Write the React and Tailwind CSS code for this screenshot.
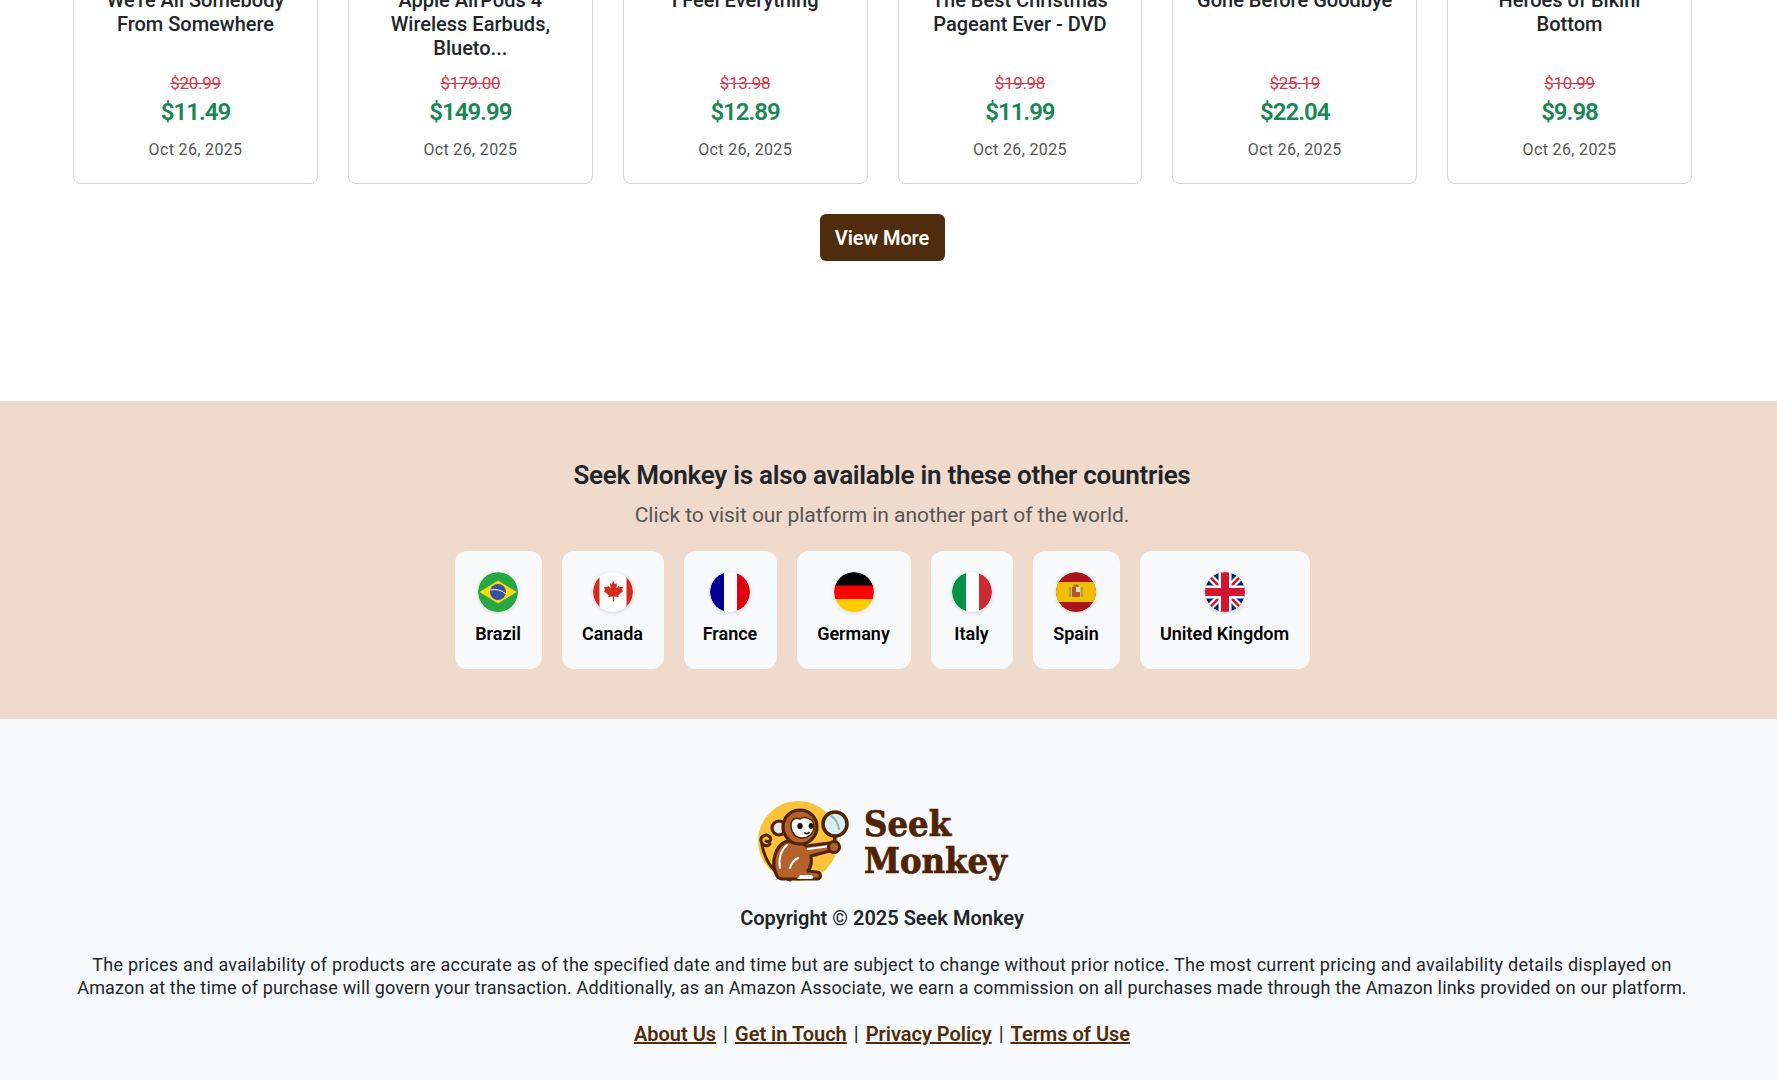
const FONT = { fontFamily: 'Roboto, sans-serif' };

const PRODUCTS = [
  { title: ["We're All Somebody", 'From Somewhere'], was: '$20.99', now: '$11.49' },
  { title: ['Apple AirPods 4', 'Wireless Earbuds,', 'Blueto...'], was: '$179.00', now: '$149.99' },
  { title: ['I Feel Everything'], was: '$13.98', now: '$12.89' },
  { title: ['The Best Christmas', 'Pageant Ever - DVD'], was: '$19.98', now: '$11.99' },
  { title: ['Gone Before Goodbye'], was: '$25.19', now: '$22.04' },
  { title: ['Heroes of Bikini', 'Bottom'], was: '$10.99', now: '$9.98' },
];

function Flag({ children }) {
  return (
    <svg viewBox="0 0 40 40" className="w-10 h-10 rounded-full drop-shadow-sm">
      <defs><clipPath id="round"><circle cx="20" cy="20" r="20" /></clipPath></defs>
      <g clipPath="url(#round)">{children}</g>
    </svg>
  );
}

const COUNTRIES = [
  { name: 'Brazil', w: 'w-[87px]', flag: <><rect width="40" height="40" fill="#28a745" /><path d="M20 8.500 38.500 20 20 31.500 1.500 20Z" fill="#fada0a" /><circle cx="20" cy="20" r="8" fill="#3b4fa8" /><path d="M12.500 18q8-2 15 3.500" stroke="#fff" strokeWidth="1" fill="none" /></> },
  { name: 'Canada', w: 'w-[102px]', flag: <><rect width="40" height="40" fill="#fff" /><rect width="6.500" height="40" fill="#d52b1e" /><rect x="33.500" width="6.500" height="40" fill="#d52b1e" /><path d="M20 8.500l2 3.800 2-1-.7 5 2.600-2.600.7 1.600 3.400-.6-1 3.500 1.300.8-5 4.200.5 1.800-4.800-.5.200 5h-1.400l.2-5-4.800.5.500-1.800-5-4.200 1.300-.8-1-3.500 3.400.6.700-1.600 2.600 2.600-.7-5 2 1z" fill="#d52b1e" /></> },
  { name: 'France', w: 'w-[93px]', flag: <><rect width="14" height="40" fill="#000091" /><rect x="14" width="13" height="40" fill="#fff" /><rect x="27" width="13" height="40" fill="#e1000f" /></> },
  { name: 'Germany', w: 'w-[114px]', flag: <><rect width="40" height="14" fill="#000" /><rect y="13.500" width="40" height="13.500" fill="#f00" /><rect y="27" width="40" height="13" fill="#fc0" /></> },
  { name: 'Italy', w: 'w-[82px]', flag: <><rect width="14" height="40" fill="#009246" /><rect x="14" width="13" height="40" fill="#fff" /><rect x="27" width="13" height="40" fill="#ce2b37" /></> },
  { name: 'Spain', w: 'w-[87px]', flag: <><rect width="40" height="40" fill="#aa151b" /><rect y="10" width="40" height="20" fill="#f1bf00" /><rect x="16" y="15" width="8" height="10" rx="1" fill="#b5532a" /><rect x="20" y="15" width="4" height="5" fill="#e8d9d0" /><rect x="13" y="15" width="2" height="10" fill="#a89a6a" /><rect x="25" y="15" width="2" height="10" fill="#a89a6a" /><rect x="17.500" y="12.500" width="5" height="2.500" fill="#a8741a" /></> },
  { name: 'United Kingdom', w: 'w-[170px]', flag: <><rect width="40" height="40" fill="#fff" /><path d="M0 0 40 40M40 0 0 40" stroke="#012169" strokeWidth="24" /><path d="M0 0 40 40M40 0 0 40" stroke="#fff" strokeWidth="7" /><path d="M0 0 40 40M40 0 0 40" stroke="#d6142f" strokeWidth="2.500" /><path d="M20 0V40M0 20H40" stroke="#fff" strokeWidth="13" /><path d="M20 0V40M0 20H40" stroke="#d6142f" strokeWidth="8" /></> },
];

function Logo() {
  return (
    <svg viewBox="7 3 96 84" className="w-[96px] h-[84px] shrink-0">
      <circle cx="48" cy="45" r="40" fill="#fdc23c" />
      <path d="M20 48c-2 3-8 2-9-3-1-5 6-8 9-4 2 3-1 6-4 4M12 49c3 15 11 29 28 35" stroke="#4f2303" strokeWidth="3" fill="none" strokeLinecap="round" />
      <path d="M26 78c-5-12-1-27 9-32 9-4 17 0 21 4l23-3c5 0 6 8 1 8l-19 5c1 6 0 11-3 15l9 1c4 0 5 7 0 7H33c-3 0-6-2-7-5z" fill="#b5612c" stroke="#4f2303" strokeWidth="3.200" strokeLinejoin="round" />
      <path d="M30 72c-2-9 1-18 7-23M40 72c1-4 4-8 8-10M58 53l19-2.500" stroke="#fff" strokeWidth="2" fill="none" strokeLinecap="round" />
      <path d="M50 79h11c3 1 3 4 0 4H47z" fill="#fff" />
      <circle cx="29" cy="32" r="7" fill="#efe6df" stroke="#4f2303" strokeWidth="3.200" />
      <circle cx="50" cy="31" r="17" fill="#b5612c" stroke="#4f2303" strokeWidth="3.200" />
      <path d="M41 29c0-6 5-8 9-6 4-3 14-1 14 7 0 8-6 12-12 12s-11-5-11-13z" fill="#fff" stroke="#4f2303" strokeWidth="1.500" />
      <ellipse cx="50" cy="30" rx="2.700" ry="3" fill="#241006" />
      <ellipse cx="61" cy="30" rx="2.400" ry="3" fill="#241006" />
      <path d="M55 37q3 1.500 4-.5" stroke="#241006" strokeWidth="1.800" fill="none" strokeLinecap="round" />
      <path d="M85 40l-1 10" stroke="#4f2303" strokeWidth="3.500" strokeLinecap="round" />
      <circle cx="84" cy="51" r="5.500" fill="#b5612c" stroke="#4f2303" strokeWidth="3" />
      <circle cx="85" cy="28" r="12" fill="#d8eef2" stroke="#4f2303" strokeWidth="3.500" />
      <path d="M81 20c4 2 7 7 8 13" stroke="#9fb0b5" strokeWidth="2" fill="none" strokeLinecap="round" />
    </svg>
  );
}

function ProductCard({ p }) {
  return (
    <div className="w-[244.8px] h-[201px] shrink-0 bg-white border border-[#d5d5d5] rounded-lg flex flex-col items-center">
      <div className="h-[89px] pt-[4px] text-[20px] leading-[24px] font-medium text-[#212529] text-center">
        {p.title.map(t => <div key={t} className="whitespace-nowrap">{t}</div>)}
      </div>
      <div className="text-[17px] leading-[20px] line-through text-[#dc3545] tracking-[-0.3px]">{p.was}</div>
      <div className="mt-[3px] text-[24px] leading-[32px] font-semibold text-[#198754] tracking-[-1px]">{p.now}</div>
      <div className="mt-[10px] text-[16px] leading-[24px] text-[#555] tracking-[0.35px]">Oct 26, 2025</div>
    </div>
  );
}

export default function App() {
  return (
    <div className="h-[1080px] overflow-hidden bg-white" style={FONT}>
      <div className="-mt-[17px] pr-[12px] flex justify-center gap-[30px]">
        {PRODUCTS.map(p => <ProductCard key={p.now} p={p} />)}
      </div>
      <div className="mt-[30px] pr-[13px] flex justify-center">
        <button className="w-[125px] h-[47px] rounded-md bg-[#4f2c0b] text-white text-[20px] font-semibold tracking-[-0.1px]">View More</button>
      </div>

      <section className="mt-[140px] h-[318px] pr-[13px] bg-[#f0dacc] flex flex-col items-center pt-[56px]">
        <h2 className="text-[26px] leading-[36px] font-semibold text-[#212529] tracking-[-0.25px]">Seek Monkey is also available in these other countries</h2>
        <p className="mt-[7px] text-[21px] leading-[30px] text-[#555] tracking-[-0.05px]">Click to visit our platform in another part of the world.</p>
        <div className="mt-[21px] flex justify-center gap-[20px]">
          {COUNTRIES.map(c => (
            <div key={c.name} className={`${c.w} h-[118px] bg-[#f8f9fa] rounded-xl flex flex-col items-center pt-[21px]`}>
              <Flag>{c.flag}</Flag>
              <div className="mt-[10px] text-[18px] leading-[24px] font-semibold text-black whitespace-nowrap">{c.name}</div>
            </div>
          ))}
        </div>
      </section>

      <footer className="h-[361px] pr-[13px] bg-[#f8f9fa] flex flex-col items-center pt-[80px]">
        <div className="flex items-center gap-[11px]">
          <Logo />
          <div className="pt-[2px] text-[36px] leading-[37px] font-bold font-stretch-condensed text-[#4f2303] [-webkit-text-stroke:0.7px_#4f2303]" style={{ fontFamily: '"DejaVu Serif Condensed", "DejaVu Serif", serif' }}>
            <div>Seek</div>
            <div>Monkey</div>
          </div>
        </div>
        <div className="mt-[20px] text-[20px] leading-[30px] font-semibold text-[#212529]">Copyright © 2025 Seek Monkey</div>
        <p className="mt-[20px] text-center text-[18px] leading-[23px] text-[#212529]">
          <span className="block whitespace-nowrap tracking-[0.25px]">The prices and availability of products are accurate as of the specified date and time but are subject to change without prior notice. The most current pricing and availability details displayed on</span>
          <span className="block whitespace-nowrap tracking-[0.17px]">Amazon at the time of purchase will govern your transaction. Additionally, as an Amazon Associate, we earn a commission on all purchases made through the Amazon links provided on our platform.</span>
        </p>
        <div className="mt-[20px] text-[20px] leading-[30px] font-semibold text-[#212529] flex gap-[7px]">
          <a className="underline text-[#4f2c0b]">About Us</a><span className="font-normal">|</span>
          <a className="underline text-[#4f2c0b]">Get in Touch</a><span className="font-normal">|</span>
          <a className="underline text-[#4f2c0b]">Privacy Policy</a><span className="font-normal">|</span>
          <a className="underline text-[#4f2c0b]">Terms of Use</a>
        </div>
      </footer>
    </div>
  );
}
